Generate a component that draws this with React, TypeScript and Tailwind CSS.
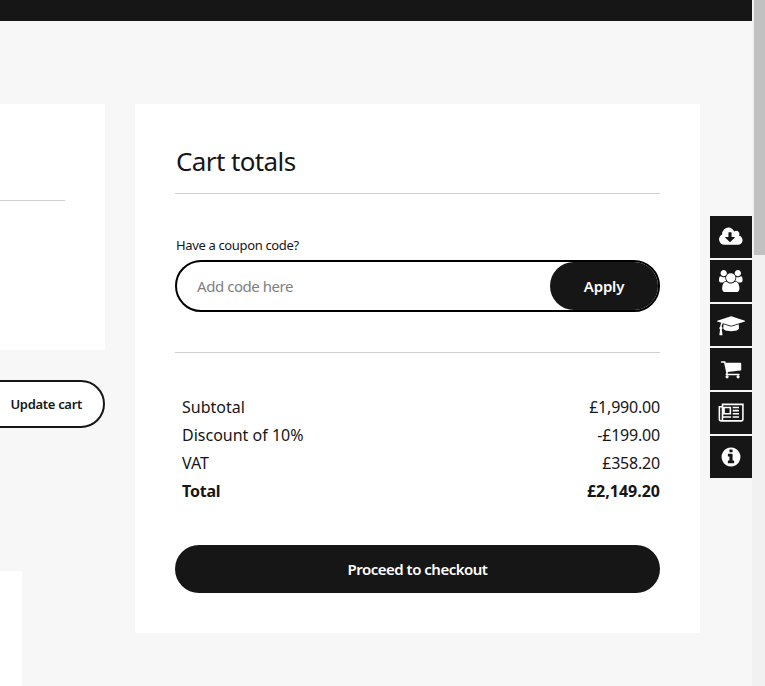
const sideLinks = [
  {
    vb: 1920,
    d: "M1280 928q0-14-9-23t-23-9h-224v-352q0-13-9.5-22.5t-22.5-9.5h-192q-13 0-22.5 9.5t-9.5 22.5v352h-224q-13 0-22.5 9.5t-9.5 22.5q0 14 9 23l352 352q9 9 23 9t23-9l351-351q10-12 10-24zm640 224q0 159-112.5 271.5t-271.5 112.5h-1088q-185 0-316.5-131.5t-131.5-316.5q0-130 70-240t188-165q-2-30-2-43 0-212 150-362t362-150q156 0 285.5 87t188.5 231q71-62 166-62 106 0 181 75t75 181q0 76-41 138 130 31 213.5 135.5t83.5 238.5z",
  },
  {
    vb: 1920,
    d: "M593 896q-162 5-265 128h-134q-82 0-138-40.5t-56-118.5q0-353 124-353 6 0 43.5 21t97.5 42.5 119 21.5q67 0 133-23-5 37-5 66 0 139 81 256zm1071 637q0 120-73 189.5t-194 69.5h-874q-121 0-194-69.5t-73-189.5q0-53 3.5-103.5t14-109 26.5-108.5 43-97.5 62-81 85.5-53.5 111.5-20q10 0 43 21.5t73 48 107 48 135 21.5 135-21.5 107-48 73-48 43-21.5q61 0 111.5 20t85.5 53.5 62 81 43 97.5 26.5 108.5 14 109 3.5 103.5zm-1024-1277q0 106-75 181t-181 75-181-75-75-181 75-181 181-75 181 75 75 181zm704 384q0 159-112.5 271.5t-271.5 112.5-271.5-112.5-112.5-271.5 112.5-271.5 271.5-112.5 271.5 112.5 112.5 271.5zm576 225q0 78-56 118.5t-138 40.5h-134q-103-123-265-128 81-117 81-256 0-29-5-66 66 23 133 23 59 0 119-21.5t97.5-42.5 43.5-21q124 0 124 353zm-128-609q0 106-75 181t-181 75-181-75-75-181 75-181 181-75 181 75 75 181z",
  },
  {
    vb: 2304,
    d: "M1774 836l18 316q4 69-82 128t-235 93.5-323 34.5-323-34.5-235-93.5-82-128l18-316 574 181q22 7 48 7t48-7zm530-260q0 23-22 31l-1120 352q-4 1-10 1t-10-1l-652-206q-43 34-71 111.5t-34 178.5q63 36 63 109 0 69-58 107l58 433q2 14-8 25-9 11-24 11h-192q-15 0-24-11-10-11-8-25l58-433q-58-38-58-107 0-73 65-111 11-207 98-330l-333-104q-22-8-22-31t22-31l1120-352q4-1 10-1t10 1l1120 352q22 8 22 31z",
  },
  {
    vb: 1792,
    d: "M704 1536q0 52-38 90t-90 38-90-38-38-90 38-90 90-38 90 38 38 90zm896 0q0 52-38 90t-90 38-90-38-38-90 38-90 90-38 90 38 38 90zm128-1088v512q0 24-16.5 42.5t-40.5 21.5l-1044 122q13 60 13 70 0 16-24 64h920q26 0 45 19t19 45-19 45-45 19h-1024q-26 0-45-19t-19-45q0-11 8-31.5t16-36 21.5-40 15.5-29.5l-177-823h-204q-26 0-45-19t-19-45 19-45 45-19h256q16 0 28.5 6.5t19.5 15.5 13 24.5 8 26 5.5 29.5 4.5 26h1201q26 0 45 19t19 45z",
  },
  {
    vb: 2304,
    d: "M1024 512h-384v384h384v-384zm128 640v128h-640v-128h640zm0-768v640h-640v-640h640zm640 768v128h-512v-128h512zm0-256v128h-512v-128h512zm0-256v128h-512v-128h512zm0-256v128h-512v-128h512zm256 1024v-1152h-1536v1152q0 32-11 64h1483q26 0 45-19t19-45zm128-1280v1280q0 80-56 136t-136 56h-1664q-80 0-136-56t-56-136v-1088h256v-192h1792zm-1920 1280q0 26 19 45t45 19 45-19 19-45v-960h-128v960z",
  },
  {
    vb: 1792,
    d: "M1152 1376v-160q0-14-9-23t-23-9h-96v-512q0-14-9-23t-23-9h-320q-14 0-23 9t-9 23v160q0 14 9 23t23 9h96v320h-96q-14 0-23 9t-9 23v160q0 14 9 23t23 9h448q14 0 23-9t9-23zm-128-896v-160q0-14-9-23t-23-9h-192q-14 0-23 9t-9 23v160q0 14 9 23t23 9h192q14 0 23-9t9-23zm640 416q0 209-103 385.5t-279.5 279.5-385.5 103-385.5-103-279.5-279.5-103-385.5 103-385.5 279.5-279.5 385.5-103 385.5 103 279.5 279.5 103 385.5z",
  },
];

const totals = [
  { label: "Subtotal", value: "£1,990.00" },
  { label: "Discount of 10%", value: "-£199.00" },
  { label: "VAT", value: "£358.20" },
];

function SideLinks() {
  return (
    <div className="absolute left-[710px] top-[216px] flex w-[42px] flex-col gap-[2px]">
      {sideLinks.map(({ vb, d }, i) => (
        <div
          key={i}
          className="flex h-[42px] items-center justify-center bg-[#161616] text-white"
        >
          {/* font-awesome 4 glyphs at 22px */}
          <svg
            width={(vb * 22) / 1792}
            height={22}
            viewBox={`0 0 ${vb} 1792`}
            fill="currentColor"
          >
            <path d={d} />
          </svg>
        </div>
      ))}
    </div>
  );
}

function CartColumn() {
  return (
    <div className="flex w-[105px] shrink-0 flex-col overflow-hidden">
      <div className="h-[246px] bg-white pt-[96px]">
        <div className="mr-[40px] h-px bg-[#cfcfcf]" />
      </div>
      <div className="mt-[30px] flex justify-end">
        <button className="h-[48px] w-[140px] shrink-0 rounded-full border-2 border-[#161616] bg-white pt-px pr-[21px] text-right text-[13px] font-semibold tracking-[-0.3px] text-[#161616]">
          Update cart
        </button>
      </div>
      <div className="mt-[143px] h-[115px] w-[22px] bg-white" />
    </div>
  );
}

function CartTotals() {
  return (
    <div className="h-[529px] w-[565px] shrink-0 bg-white px-[40px] pt-[39px] text-[#161616]">
      <h2 className="pl-px text-[26px] leading-[36px] tracking-[-0.6px]">Cart totals</h2>
      <div className="mt-[14px] h-px bg-[#cfcfcf]" />
      <p className="mt-[42px] pl-px text-[13px] leading-[18px] tracking-[-0.35px]">
        Have a coupon code?
      </p>
      <div className="mt-[6px] flex h-[52px] items-center rounded-full border-2 border-black pl-[20px]">
        <span className="flex-1 text-[15px] tracking-[-0.45px] text-[#808080]">Add code here</span>
        <button className="h-[48px] w-[108px] rounded-full bg-[#161616] text-[15px] font-semibold tracking-[-0.2px] text-white">
          Apply
        </button>
      </div>
      <div className="mt-[40px] h-px bg-[#cfcfcf]" />
      <div className="mt-[40px] flex flex-col">
        {totals.map((row) => (
          <div key={row.label} className="flex h-[28px] items-center justify-between pl-[7px] text-[16px]">
            <span>{row.label}</span>
            <span className="tracking-[-0.2px]">{row.value}</span>
          </div>
        ))}
        <div className="flex h-[28px] items-center justify-between pl-[7px] text-[16px] font-bold">
          <span className="tracking-[-0.2px]">Total</span>
          <span>£2,149.20</span>
        </div>
      </div>
      <button className="mt-[40px] h-[48px] w-full rounded-full bg-[#161616] text-[15px] font-semibold tracking-[-0.5px] text-white">
        Proceed to checkout
      </button>
    </div>
  );
}

export default function App() {
  return (
    <div className="relative flex h-[686px] w-[765px] overflow-hidden font-['Noto_Sans',sans-serif]">
      <div className="flex w-[752px] flex-col bg-[#f7f7f7]">
        <div className="h-[21px] bg-[#161616]" />
        <div className="mt-[83px] flex gap-[30px]">
          <CartColumn />
          <CartTotals />
        </div>
      </div>
      <div className="w-[13px] bg-[#f1f1f1] pl-[2px]">
        <div className="h-[255px] bg-[#c1c1c1]" />
      </div>
      <SideLinks />
    </div>
  );
}
